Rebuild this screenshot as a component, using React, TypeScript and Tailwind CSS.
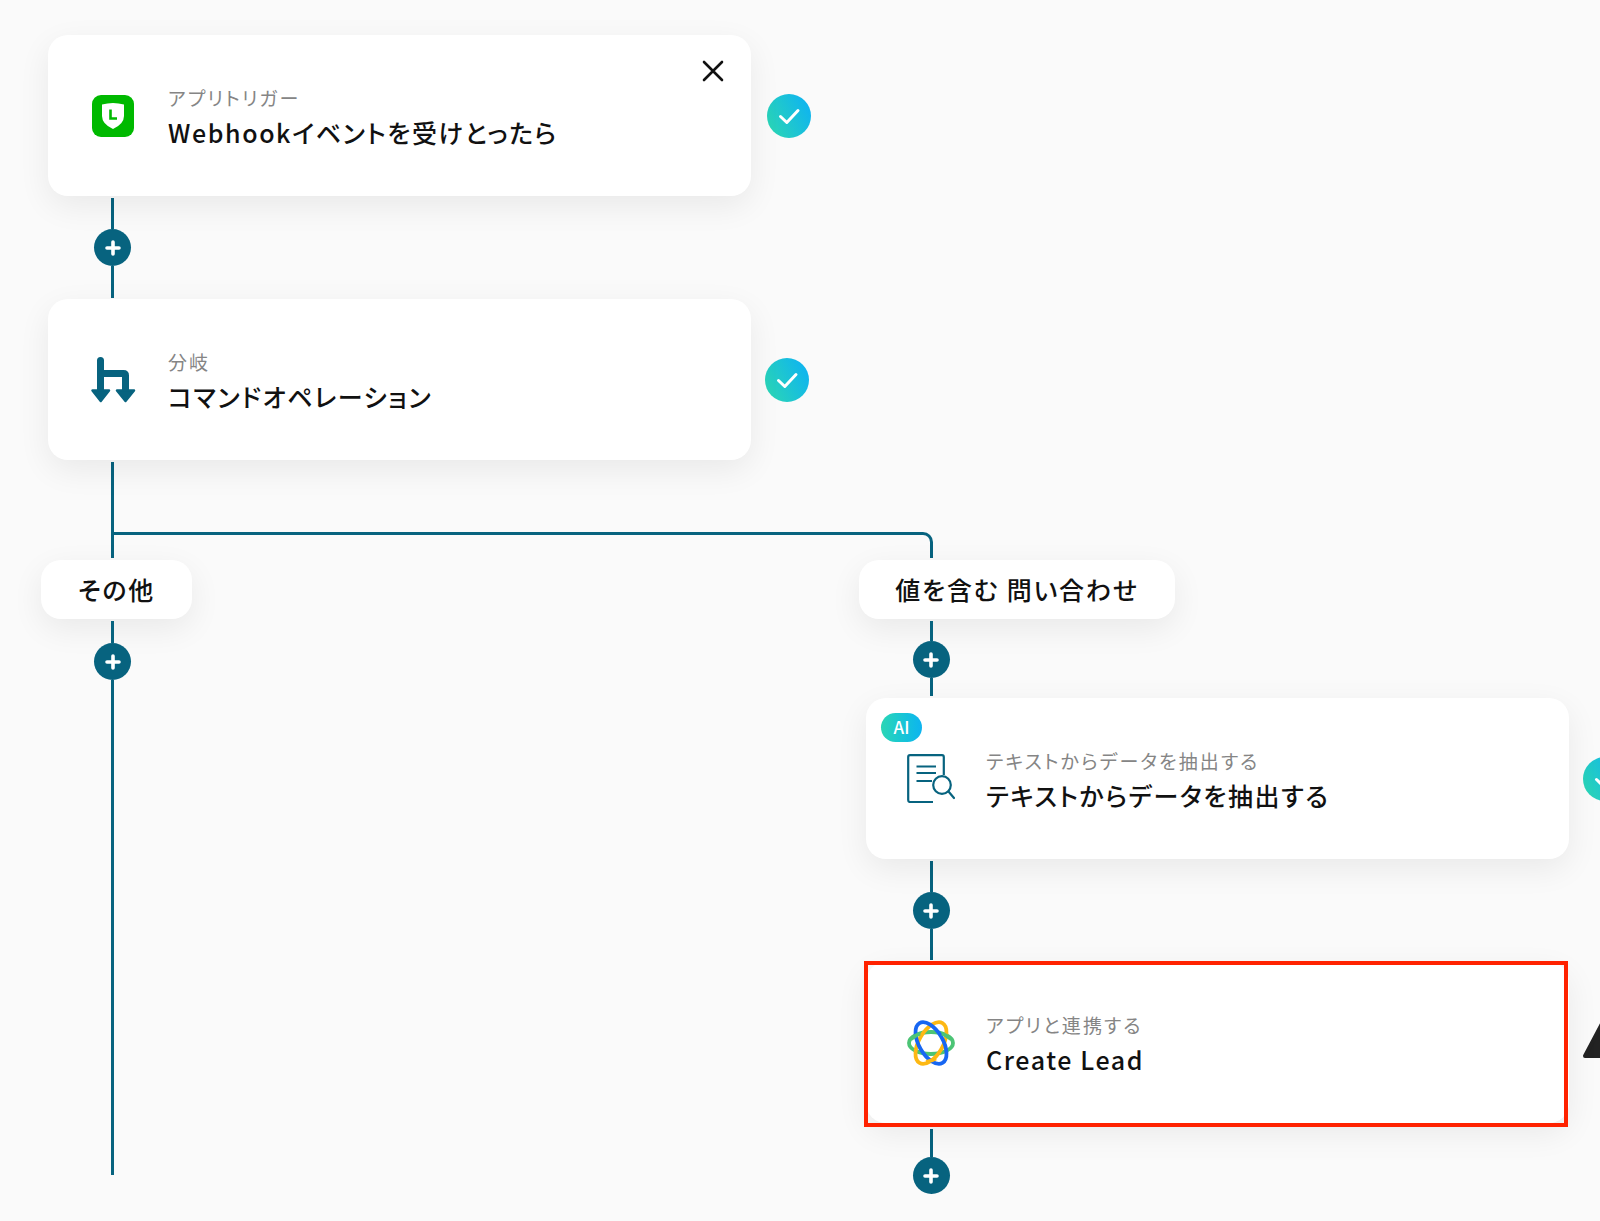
import type { ReactNode } from 'react';

const CheckBadge = () => (
  <svg width="44" height="44" viewBox="0 0 44 44" className="shrink-0">
    <defs>
      <linearGradient id="checkGrad" x1="0" y1="0.8" x2="1" y2="0.3">
        <stop offset="0" stopColor="#2bd6b4" />
        <stop offset="1" stopColor="#0fb4f0" />
      </linearGradient>
    </defs>
    <circle cx="22" cy="22" r="22" fill="url(#checkGrad)" />
    <path d="M13.5 22.5 L19.8 28.5 L31 16.5" fill="none" stroke="#fff" strokeWidth="3" strokeLinecap="round" strokeLinejoin="round" />
  </svg>
);

const WarnBadge = () => (
  <svg width="44" height="46" viewBox="0 0 44 46" className="mb-[11px] shrink-0">
    <path d="M22 4 L42 42 H2 Z" fill="#222" stroke="#222" strokeWidth="4" strokeLinejoin="round" />
  </svg>
);

const PlusDot = () => (
  <div className="flex h-[37px] w-[37px] shrink-0 items-center justify-center rounded-full bg-[#07637f]">
    <svg width="16" height="16" viewBox="0 0 16 16">
      <path d="M8 2 V14 M2 8 H14" stroke="#fff" strokeWidth="3.6" strokeLinecap="round" />
    </svg>
  </div>
);

const Line = ({ className }: { className: string }) => <div className={`w-[3px] bg-[#07637f] ${className}`} />;

const LineIcon = () => (
  <svg width="42" height="42" viewBox="0 0 42 42">
    <rect width="42" height="42" rx="9" fill="#00b900" />
    <path d="M10 9.5 Q21 6.5 32 9.5 V21 Q32 29 21 34 Q10 29 10 21 Z" fill="#fff" />
    <path d="M18.5 14.5 V23.5 H25" fill="none" stroke="#00b900" strokeWidth="2.6" />
  </svg>
);

const BranchIcon = () => (
  <svg width="46" height="46" viewBox="0 0 46 46">
    <path d="M10.5 3.5 V33 M10.5 16.5 H33.5 Q35.5 16.5 35.5 18.5 V33" fill="none" stroke="#07637f" strokeWidth="7" strokeLinecap="round" />
    <path d="M2.5 33.5 H19 L10.75 44 Z M27 33.5 H44 L35.5 44 Z" fill="#07637f" stroke="#07637f" strokeWidth="2.5" strokeLinejoin="round" />
  </svg>
);

const DocIcon = () => (
  <svg width="48" height="49" viewBox="0 0 48 49" fill="none" stroke="#07637f" strokeWidth="2.2" className="ml-[1px]">
    <path d="M26 48 H3 Q1.2 48 1.2 46 V3 Q1.2 1.2 3 1.2 H35 Q36.8 1.2 36.8 3 V21" />
    <path d="M9.5 12.5 H29 M9.5 19 H29 M9.5 27 H25" />
    <circle cx="35" cy="31" r="8.8" />
    <path d="M41.5 37.5 L47 44" strokeLinecap="round" />
  </svg>
);

const AtomIcon = () => (
  <svg width="50" height="50" viewBox="0 0 50 50" fill="none" strokeWidth="3.8">
    <ellipse cx="25" cy="25" rx="22" ry="11" stroke="#4cc475" />
    <ellipse cx="25" cy="25" rx="23" ry="12" stroke="#fdb813" transform="rotate(-60 25 25)" />
    <ellipse cx="25" cy="25" rx="23" ry="12" stroke="#1766f2" transform="rotate(60 25 25)" />
    <path d="M20 44 Q25 43 30 40.5" stroke="#fdb813" />
    <path d="M36 15.5 Q41 17.5 45 21" stroke="#4cc475" />
    <path d="M5 21 Q9 17.5 14 15.5" stroke="#4cc475" />
  </svg>
);

function FlowCard({ icon, label, title, children }: { icon: ReactNode; label: string; title: string; children?: ReactNode }) {
  return (
    <div className="relative flex h-[161px] w-[703px] shrink-0 items-center rounded-[20px] bg-white pl-[34px] shadow-[0_10px_32px_rgba(0,0,0,0.07)]">
      <div className="mr-[25px] flex w-[61px] shrink-0 items-center justify-center">{icon}</div>
      <div className="mb-[2px]">
        <div className="text-[19px] leading-[36px] tracking-[2.1px] text-[#858585] [font-feature-settings:'palt']">{label}</div>
        <div className="-mt-[2px] text-[25px] leading-[36px] font-medium tracking-[1.6px] text-[#111] [font-feature-settings:'palt']">{title}</div>
      </div>
      {children}
    </div>
  );
}

function BranchLabel({ text, width }: { text: string; width: string }) {
  return (
    <div className={`flex h-[59px] items-center justify-center rounded-[20px] bg-white pt-[1px] text-[25px] font-medium tracking-[1.8px] text-[#111] shadow-[0_10px_32px_rgba(0,0,0,0.07)] [font-feature-settings:'palt'] ${width}`}>
      {text}
    </div>
  );
}

export default function App() {
  return (
    <div className="h-[1221px] w-[1600px] overflow-hidden bg-[#fafafa] pt-[35px] pl-[48px] font-['Noto_Sans_CJK_JP',sans-serif]">
      <div className="flex items-center gap-[16px]">
        <FlowCard icon={<LineIcon />} label="アプリトリガー" title="Webhookイベントを受けとったら">
          <svg width="22" height="22" viewBox="0 0 22 22" className="absolute top-[25px] right-[27px]">
            <path d="M2 2 L20 20 M20 2 L2 20" stroke="#111" strokeWidth="2.6" strokeLinecap="round" />
          </svg>
        </FlowCard>
        <CheckBadge />
      </div>

      <div className="mt-[2px] mb-[1px] ml-[46px] flex w-[37px] flex-col items-center">
        <Line className="h-[31px]" />
        <PlusDot />
        <Line className="h-[32px]" />
      </div>

      <div className="flex items-center gap-[14px]">
        <FlowCard icon={<BranchIcon />} label="分岐" title="コマンドオペレーション" />
        <CheckBadge />
      </div>

      <div className="mt-[2px] ml-[63px]">
        <Line className="h-[70px]" />
        <div className="h-[26px] w-[822px] rounded-tr-[10px] border-x-[3px] border-t-[3px] border-[#07637f]" />
      </div>

      <div className="mt-[2px] -ml-[7px] flex">
        <div className="w-[818px] shrink-0">
          <BranchLabel text="その他" width="w-[151px]" />
          <div className="mt-[2px] ml-[53px] flex w-[37px] flex-col items-center">
            <Line className="h-[22px]" />
            <PlusDot />
            <Line className="h-[495px]" />
          </div>
        </div>

        <div className="shrink-0">
          <BranchLabel text="値を含む 問い合わせ" width="w-[316px]" />
          <div className="mt-[2px] ml-[53.5px] flex w-[37px] flex-col items-center">
            <Line className="h-[20px]" />
            <PlusDot />
            <Line className="h-[18px]" />
          </div>
          <div className="mt-[2px] ml-[7px] flex items-center gap-[14px]">
            <FlowCard icon={<DocIcon />} label="テキストからデータを抽出する" title="テキストからデータを抽出する">
              <div className="absolute top-[15px] left-[15px] flex h-[29px] w-[41px] items-center justify-center rounded-full bg-linear-to-r from-[#2bd6b4] to-[#0fb4f0] pb-[1px] text-[17px] font-medium text-white">AI</div>
            </FlowCard>
            <CheckBadge />
          </div>
          <div className="mt-[2px] ml-[53.5px] flex w-[37px] flex-col items-center">
            <Line className="h-[31px]" />
            <PlusDot />
            <Line className="h-[31px]" />
          </div>
          <div className="relative mt-[1px] ml-[5px] flex h-[166px] w-[704px] items-center pt-[1px] pl-[2px]">
            <div className="-mt-[4px] flex items-center gap-[14px]">
              <FlowCard icon={<AtomIcon />} label="アプリと連携する" title="Create Lead" />
              <WarnBadge />
            </div>
            <div className="absolute inset-0 border-[4px] border-[#ff2200]" />
          </div>
          <div className="mt-[2px] ml-[53.5px] flex w-[37px] flex-col items-center">
            <Line className="h-[28px]" />
            <PlusDot />
          </div>
        </div>
      </div>
    </div>
  );
}
